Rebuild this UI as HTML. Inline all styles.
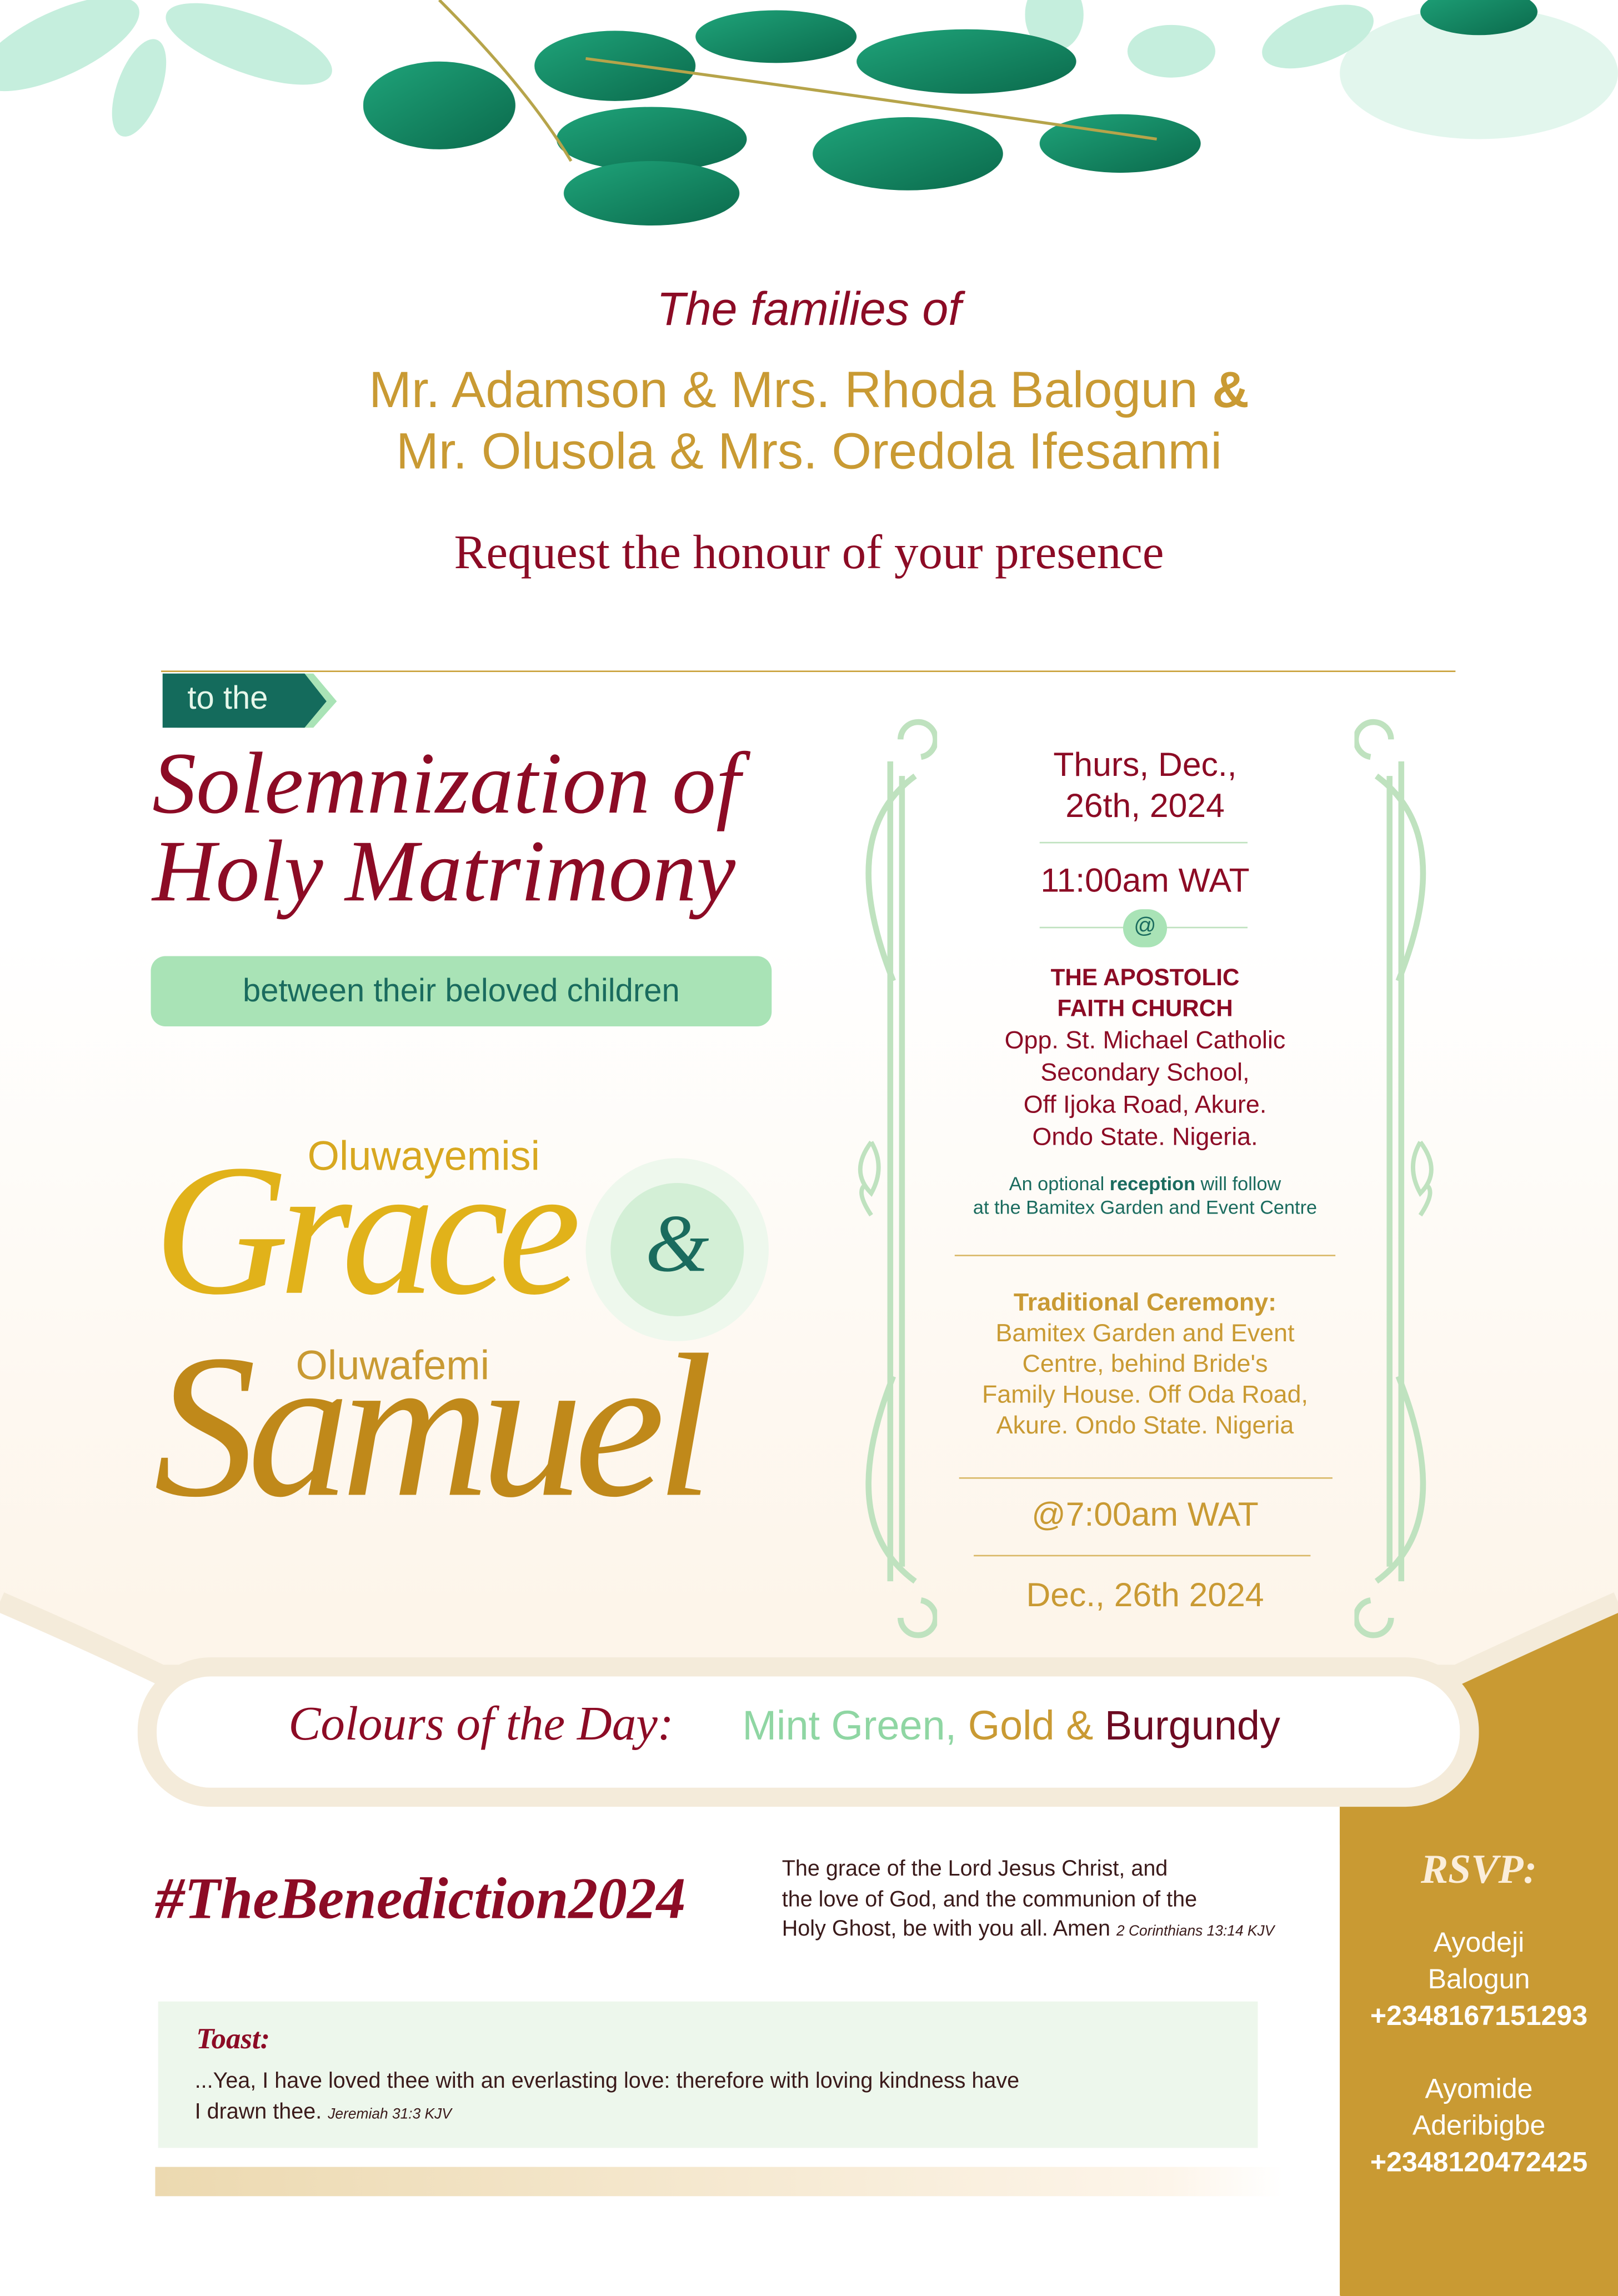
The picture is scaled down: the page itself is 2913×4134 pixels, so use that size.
<!DOCTYPE html>
<html><head><meta charset="utf-8">
<style>
html,body{margin:0;padding:0;width:2913px;height:4133px;overflow:hidden;background:#fff}
#w{position:absolute;left:0;top:0;width:1105px;height:1568px;transform:scale(2.6362);transform-origin:0 0;overflow:hidden;
background:linear-gradient(#fff 0,#fff 640px,#fdf5ea 1100px,#fdf5ea 1568px);font-family:"Liberation Sans",sans-serif}
.a{position:absolute}
.c{text-align:center}
.ser{font-family:"Liberation Serif",serif}
.bur{color:#8c0b25}
.gold{color:#c99a33}
.teal{color:#1a6b5e}
.line{position:absolute;height:1px}
</style></head><body><div id="w">

<svg class="a" style="left:0;top:0" width="1105" height="170">
<defs><linearGradient id="lf" x1="0" y1="0" x2="1" y2="1"><stop offset="0" stop-color="#1fa47a"/><stop offset="1" stop-color="#0b6a4c"/></linearGradient></defs>
<g fill="#9fe3c6" opacity=".6">
<ellipse cx="40" cy="30" rx="60" ry="22" transform="rotate(-25 40 30)"/>
<ellipse cx="170" cy="30" rx="60" ry="20" transform="rotate(20 170 30)"/>
<ellipse cx="95" cy="60" rx="15" ry="35" transform="rotate(20 95 60)"/>
<ellipse cx="800" cy="35" rx="30" ry="18"/>
<ellipse cx="900" cy="25" rx="40" ry="18" transform="rotate(-20 900 25)"/>
<ellipse cx="1010" cy="50" rx="95" ry="45" opacity=".5"/>
<ellipse cx="720" cy="10" rx="20" ry="25"/>
</g>
<g fill="url(#lf)">
<ellipse cx="300" cy="72" rx="52" ry="30"/>
<ellipse cx="420" cy="45" rx="55" ry="24"/>
<ellipse cx="530" cy="25" rx="55" ry="18"/>
<ellipse cx="660" cy="42" rx="75" ry="22"/>
<ellipse cx="445" cy="95" rx="65" ry="22"/>
<ellipse cx="445" cy="132" rx="60" ry="22"/>
<ellipse cx="620" cy="105" rx="65" ry="25"/>
<ellipse cx="765" cy="98" rx="55" ry="20"/>
<ellipse cx="1010" cy="8" rx="40" ry="16"/>
</g>
<path d="M300 0 Q360 60 390 110 M400 40 Q550 60 790 95" stroke="#b6a44a" stroke-width="2" fill="none"/>
</svg>

<div class="a c bur" style="left:0;width:1105px;top:193px;font-size:32px;font-style:italic">The families of</div>
<div class="a c gold" style="left:0;width:1105px;top:246px;font-size:35px;line-height:42px">Mr. Adamson &amp; Mrs. Rhoda Balogun <b>&amp;</b><br>Mr. Olusola &amp; Mrs. Oredola Ifesanmi</div>
<div class="a c ser bur" style="left:0;width:1105px;top:360px;font-size:33px">Request the honour of your presence</div>

<div class="line" style="left:110px;width:884px;top:458px;background:#c9a13a"></div>
<svg class="a" style="left:111px;top:460px" width="120" height="38"><path d="M10 0H103L119 19 103 37H10Z" fill="#a9e3b6"/><path d="M0 0H97L112 19 97 37H0Z" fill="#146b5c"/></svg>
<div class="a" style="left:128px;top:464px;font-size:22px;color:#e5f7ea">to the</div>

<div class="a ser bur" style="left:104px;top:505px;font-size:60px;font-style:italic;line-height:60px">Solemnization of<br>Holy Matrimony</div>
<div class="a c teal" style="left:103px;top:653px;width:424px;height:48px;line-height:48px;background:#a9e3b6;border-radius:10px;font-size:22px">between their beloved children</div>

<div class="a" style="left:210px;top:774px;font-size:28px;color:#d8a820">Oluwayemisi</div>
<div class="a ser" style="left:105px;top:775px;font-size:128px;font-style:italic;letter-spacing:-7px;line-height:130px;color:#e1b21a">Grace</div>
<div class="a" style="left:400px;top:791px;width:125px;height:125px;border-radius:50%;background:#eef8ed"></div>
<div class="a" style="left:417px;top:808px;width:91px;height:91px;border-radius:50%;background:#d3efd6"></div>
<div class="a c ser teal" style="left:417px;top:818px;width:91px;font-size:56px;font-style:italic">&amp;</div>
<div class="a" style="left:202px;top:917px;font-size:28px;color:#c99a33">Oluwafemi</div>
<div class="a ser" style="left:105px;top:905px;font-size:140px;font-style:italic;letter-spacing:-6px;line-height:140px;color:#c0891a">Samuel</div>

<svg class="a" style="left:0;top:1060px" width="1105" height="200">
<path d="M0 36 Q60 60 110 86 L1000 86 Q1060 55 1105 36 V200 H0Z" fill="#fff"/>
<path d="M1105 36 Q1050 62 995 86 L960 86 L960 174 L915 174 L915 200 L1105 200Z" fill="#c99a33"/>
<path d="M0 34 Q60 60 110 84 L995 84 Q1055 56 1105 34" fill="none" stroke="#f4ebda" stroke-width="14"/>
</svg>

<svg class="a" style="left:580px;top:490px" width="60" height="630" fill="none" stroke="#bfe2bf" stroke-width="4">
<path d="M35 15 a12 12 0 1 1 14 12 M28 30 V590 M36 40 V580 M45 40 Q-10 80 30 180"/>
<path d="M35 615 a12 12 0 1 0 14 -12 M45 590 Q-10 550 30 450"/>
<path d="M15 290 q-15 20 0 35 q10 -18 0 -35 M15 340 q-10 -15 -5 -20" stroke-width="3"/>
</svg>
<svg class="a" style="left:925px;top:490px;transform:scaleX(-1)" width="60" height="630" fill="none" stroke="#bfe2bf" stroke-width="4">
<path d="M35 15 a12 12 0 1 1 14 12 M28 30 V590 M36 40 V580 M45 40 Q-10 80 30 180"/>
<path d="M35 615 a12 12 0 1 0 14 -12 M45 590 Q-10 550 30 450"/>
<path d="M15 290 q-15 20 0 35 q10 -18 0 -35 M15 340 q-10 -15 -5 -20" stroke-width="3"/>
</svg>

<div class="a c bur" style="left:640px;width:284px;top:508px;font-size:23px;line-height:28px">Thurs, Dec.,<br>26th, 2024</div>
<div class="line" style="left:710px;width:142px;top:575px;background:#bfe2bf"></div>
<div class="a c bur" style="left:640px;width:284px;top:588px;font-size:23px">11:00am WAT</div>
<div class="line" style="left:710px;width:142px;top:633px;background:#bfe2bf"></div>
<div class="a c teal" style="left:767px;top:621px;width:30px;height:26px;border-radius:13px;background:#a9e3b6;font-size:15px;line-height:24px">@</div>
<div class="a c bur" style="left:630px;width:304px;top:658px;font-size:16px;line-height:21px"><b>THE APOSTOLIC<br>FAITH CHURCH</b><br><span style="font-size:17px">Opp. St. Michael Catholic<br>Secondary School,<br>Off Ijoka Road, Akure.<br>Ondo State. Nigeria.</span></div>
<div class="a c teal" style="left:630px;width:304px;top:801px;font-size:13px;line-height:16px">An optional <b>reception</b> will follow<br>at the Bamitex Garden and Event Centre</div>
<div class="line" style="left:652px;width:260px;top:857px;background:#d9b866"></div>
<div class="a c gold" style="left:630px;width:304px;top:879px;font-size:17px;line-height:21px"><b>Traditional Ceremony:</b><br>Bamitex Garden and Event<br>Centre, behind Bride's<br>Family House. Off Oda Road,<br>Akure. Ondo State. Nigeria</div>
<div class="line" style="left:655px;width:255px;top:1009px;background:#d9b866"></div>
<div class="a c gold" style="left:630px;width:304px;top:1021px;font-size:23px">@7:00am WAT</div>
<div class="line" style="left:665px;width:230px;top:1062px;background:#d9b866"></div>
<div class="a c gold" style="left:630px;width:304px;top:1076px;font-size:23px">Dec., 26th 2024</div>

<div class="a" style="left:0;top:1234px;width:915px;height:334px;background:#fff"></div>
<div class="a" style="left:915px;top:1234px;width:190px;height:334px;background:#c99a33"></div>
<div class="a" style="left:94px;top:1132px;width:890px;height:76px;border:13px solid #f4ebda;border-radius:50px;background:#fff"></div>
<div class="a ser bur" style="left:197px;top:1160px;font-size:33px;font-style:italic">Colours of the Day:</div>
<div class="a" style="left:507px;top:1163px;font-size:28px"><span style="color:#8fd6a3">Mint Green,</span> <span class="gold">Gold &amp;</span> <span style="color:#6d0b22">Burgundy</span></div>

<div class="a ser bur" style="left:106px;top:1273px;font-size:40px;font-style:italic;font-weight:bold">#TheBenediction2024</div>
<div class="a" style="left:534px;top:1267px;font-size:15px;line-height:20.5px;color:#3a1a1a">The grace of the Lord Jesus Christ, and<br>the love of God, and the communion of the<br>Holy Ghost, be with you all. Amen <i style="font-size:10px">2 Corinthians 13:14 KJV</i></div>

<div class="a" style="left:108px;top:1367px;width:751px;height:100px;background:#edf7ec"></div>
<div class="a ser bur" style="left:134px;top:1382px;font-size:20px;font-style:italic;font-weight:bold">Toast:</div>
<div class="a" style="left:133px;top:1411px;font-size:15px;line-height:21px;color:#3a1a1a">...Yea, I have loved thee with an everlasting love: therefore with loving kindness have<br>I drawn thee. <i style="font-size:10px">Jeremiah 31:3 KJV</i></div>
<div class="a" style="left:106px;top:1480px;width:770px;height:20px;background:linear-gradient(90deg,#ecd9b0,#fdf5ea 90%,#fff)"></div>

<div class="a ser c" style="left:915px;width:190px;top:1262px;font-size:28px;font-style:italic;font-weight:bold;color:#fbeedb">RSVP:</div>
<div class="a c" style="left:915px;width:190px;top:1315px;font-size:19px;line-height:25px;color:#fff">Ayodeji<br>Balogun<br><b>+2348167151293</b><br><br>Ayomide<br>Aderibigbe<br><b>+2348120472425</b></div>
</div></body></html>
